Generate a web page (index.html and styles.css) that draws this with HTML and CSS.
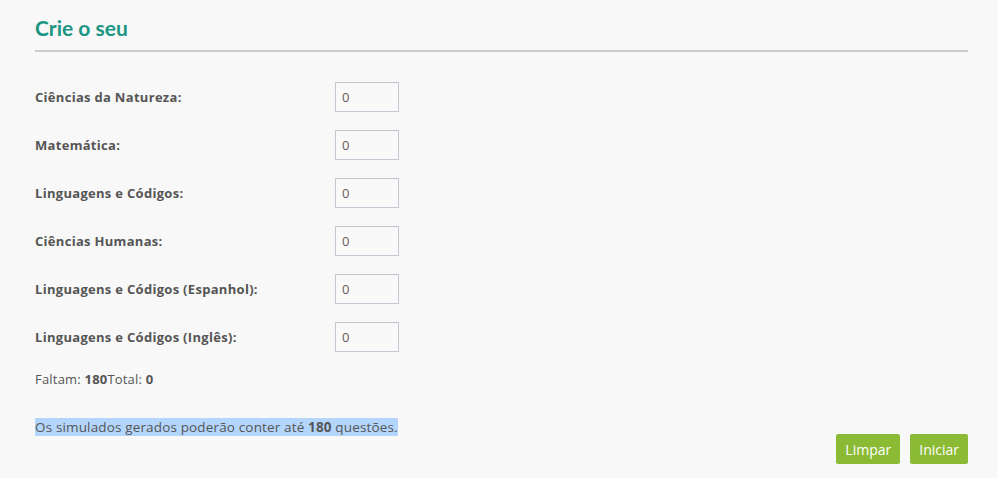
FILE: index.html
```html
<!DOCTYPE html>
<html lang="pt">
<head>
<meta charset="utf-8">
<link rel="stylesheet" href="styles.css">
</head>
<body>
<div class="page">
  <h2 class="title">Crie o seu</h2>
  <form class="form">
    <div class="row"><label class="label">Ciências da Natureza:</label><input class="num" type="text" value="0"></div>
    <div class="row"><label class="label">Matemática:</label><input class="num" type="text" value="0"></div>
    <div class="row"><label class="label">Linguagens e Códigos:</label><input class="num" type="text" value="0"></div>
    <div class="row"><label class="label">Ciências Humanas:</label><input class="num" type="text" value="0"></div>
    <div class="row"><label class="label">Linguagens e Códigos (Espanhol):</label><input class="num" type="text" value="0"></div>
    <div class="row"><label class="label">Linguagens e Códigos (Inglês):</label><input class="num" type="text" value="0"></div>
  </form>
  <p class="count">Faltam: <b>180</b>Total: <b>0</b></p>
  <p class="note"><span class="sel">Os simulados gerados poderão conter até <b>180</b> questões.</span></p>
  <div class="actions">
    <button class="btn" type="button">Limpar</button>
    <button class="btn" type="button">Iniciar</button>
  </div>
</div>
</body>
</html>
```
FILE: styles.css
```css
html, body {
  margin: 0;
  padding: 0;
  background: #f8f8f8;
}
body {
  font-family: "Open Sans", Lato, sans-serif;
  color: #555;
}
.page {
  padding: 14px 30px 0 35px;
}
.title {
  margin: 0;
  font-family: Lato, sans-serif;
  font-size: 21px;
  font-weight: 700;
  color: #1b9683;
  line-height: 28px;
  padding-bottom: 8px;
  border-bottom: 2px solid #cbcbcb;
}
.form {
  display: flex;
  flex-direction: column;
  gap: 18px;
  margin-top: 30px;
}
.row {
  display: flex;
  align-items: center;
  height: 30px;
}
.label {
  width: 300px;
  font-size: 13px;
  font-weight: 700;
  letter-spacing: 0.3px;
  color: #555;
}
.num {
  box-sizing: border-box;
  width: 64px;
  height: 30px;
  margin: 0;
  padding: 0 6px;
  border: 1px solid #c6c6d2;
  background: #f9f9f9;
  font-family: inherit;
  font-size: 13px;
  color: #6b5a5a;
  outline: none;
}
.count {
  margin: 19px 0 0;
  font-size: 13px;
  line-height: 16px;
  letter-spacing: 0.2px;
  color: #555;
}
.note {
  margin: 32px 0 0;
  font-size: 13.5px;
  line-height: 17px;
  letter-spacing: 0.15px;
  color: #555;
}
.sel {
  background: #b4d5fc;
}
.actions {
  display: flex;
  justify-content: flex-end;
  gap: 10px;
  margin-top: -2px;
}
.btn {
  height: 30px;
  padding: 0 9px;
  border: 0;
  border-radius: 2px;
  background: #8bbb34;
  color: #fff;
  font-family: inherit;
  font-size: 14px;
  cursor: pointer;
}
```
